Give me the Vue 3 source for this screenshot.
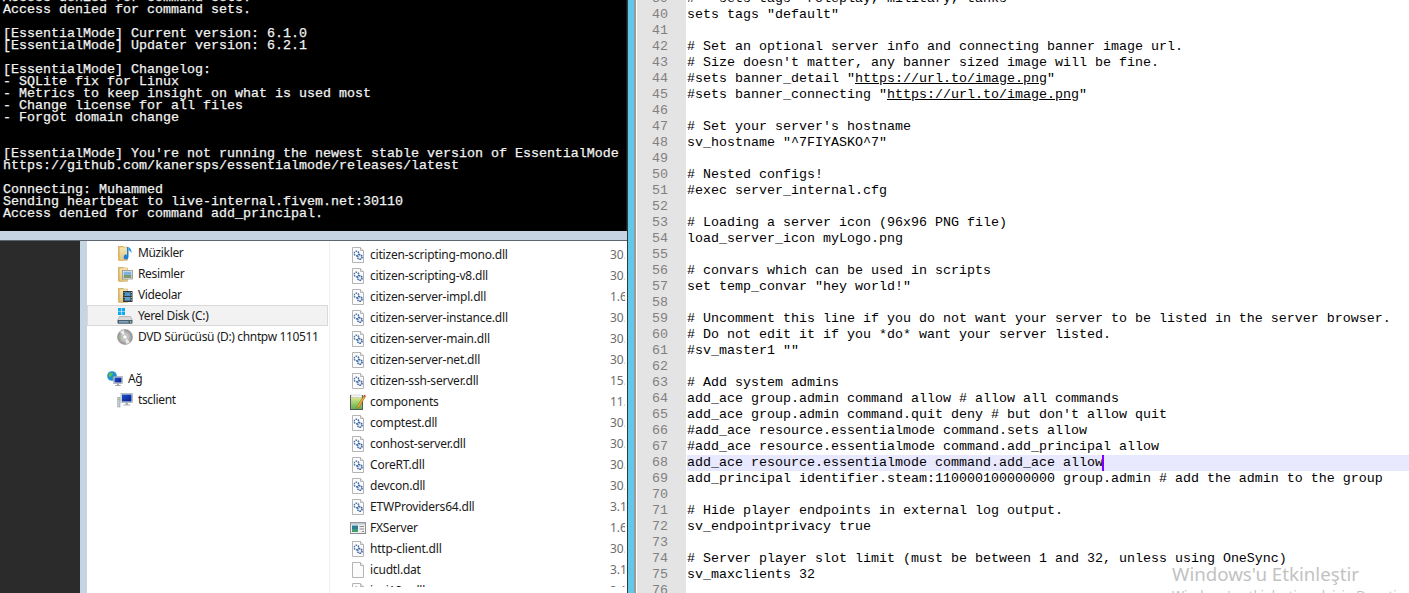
<script setup>
const consoleLines = [
  'Access denied for command sets.',
  'Access denied for command sets.',
  '',
  '[EssentialMode] Current version: 6.1.0',
  '[EssentialMode] Updater version: 6.2.1',
  '',
  '[EssentialMode] Changelog:',
  '- SQLite fix for Linux',
  '- Metrics to keep insight on what is used most',
  '- Change license for all files',
  '- Forgot domain change',
  '',
  '',
  "[EssentialMode] You're not running the newest stable version of EssentialMode",
  'https://github.com/kanersps/essentialmode/releases/latest',
  '',
  'Connecting: Muhammed',
  'Sending heartbeat to live-internal.fivem.net:30110',
  'Access denied for command add_principal.',
]

const navItems = [
  { label: 'Müzikler', icon: 'i-music' },
  { label: 'Resimler', icon: 'i-picture' },
  { label: 'Videolar', icon: 'i-video' },
  { label: 'Yerel Disk (C:)', icon: 'i-disk', selected: true },
  { label: 'DVD Sürücüsü (D:) chntpw 110511', icon: 'i-dvd' },
  { label: '', spacer: true },
  { label: 'Ağ', icon: 'i-net', top: true },
  { label: 'tsclient', icon: 'i-ts' },
]

const files = [
  ['citizen-scripting-mono.dll', 'i-dll', '30.'],
  ['citizen-scripting-v8.dll', 'i-dll', '30.'],
  ['citizen-server-impl.dll', 'i-dll', '1.6'],
  ['citizen-server-instance.dll', 'i-dll', '30.'],
  ['citizen-server-main.dll', 'i-dll', '30.'],
  ['citizen-server-net.dll', 'i-dll', '30.'],
  ['citizen-ssh-server.dll', 'i-dll', '15.'],
  ['components', 'i-ini', '11.'],
  ['comptest.dll', 'i-dll', '30.'],
  ['conhost-server.dll', 'i-dll', '30.'],
  ['CoreRT.dll', 'i-dll', '30.'],
  ['devcon.dll', 'i-dll', '30.'],
  ['ETWProviders64.dll', 'i-dll', '3.1'],
  ['FXServer', 'i-exe', '1.6'],
  ['http-client.dll', 'i-dll', '30.'],
  ['icudtl.dat', 'i-blank', '3.1'],
  ['icui18n.dll', 'i-dll', '3.1'],
]

const code = [
  '#   sets tags "roleplay, military, tanks"',
  'sets tags "default"',
  '',
  '# Set an optional server info and connecting banner image url.',
  "# Size doesn't matter, any banner sized image will be fine.",
  { pre: '#sets banner_detail "', link: 'https://url.to/image.png', post: '"' },
  { pre: '#sets banner_connecting "', link: 'https://url.to/image.png', post: '"' },
  '',
  "# Set your server's hostname",
  'sv_hostname "^7FIYASKO^7"',
  '',
  '# Nested configs!',
  '#exec server_internal.cfg',
  '',
  '# Loading a server icon (96x96 PNG file)',
  'load_server_icon myLogo.png',
  '',
  '# convars which can be used in scripts',
  'set temp_convar "hey world!"',
  '',
  '# Uncomment this line if you do not want your server to be listed in the server browser.',
  '# Do not edit it if you *do* want your server listed.',
  '#sv_master1 ""',
  '',
  '# Add system admins',
  'add_ace group.admin command allow # allow all commands',
  "add_ace group.admin command.quit deny # but don't allow quit",
  '#add_ace resource.essentialmode command.sets allow',
  '#add_ace resource.essentialmode command.add_principal allow',
  { pre: 'add_ace resource.essentialmode command.add_ace allow', active: true },
  'add_principal identifier.steam:110000100000000 group.admin # add the admin to the group',
  '',
  '# Hide player endpoints in external log output.',
  'sv_endpointprivacy true',
  '',
  '# Server player slot limit (must be between 1 and 32, unless using OneSync)',
  'sv_maxclients 32',
  '',
].map((l, i) => ({ n: 39 + i, ...(typeof l === 'string' ? { pre: l } : l) }))
</script>

<template>
  <div class="screen">
    <svg class="defs" aria-hidden="true">
      <defs>
        <linearGradient id="fold" x1="0" y1="0" x2="0" y2="1">
          <stop offset="0" stop-color="#f7e7b4" />
          <stop offset="1" stop-color="#e3c57f" />
        </linearGradient>
        <linearGradient id="scr" x1="0" y1="0" x2="1" y2="1">
          <stop offset="0" stop-color="#1e4fd0" />
          <stop offset="1" stop-color="#0a1f86" />
        </linearGradient>
        <linearGradient id="note" x1="0" y1="0" x2="0" y2="1">
          <stop offset="0" stop-color="#f4ee9a" />
          <stop offset="1" stop-color="#57b04a" />
        </linearGradient>
        <radialGradient id="cd">
          <stop offset="0" stop-color="#f4f4f4" />
          <stop offset="0.6" stop-color="#b5b5b5" />
          <stop offset="1" stop-color="#8f8f8f" />
        </radialGradient>
        <symbol id="i-folder" viewBox="0 0 16 16">
          <path d="M1 1h5l1 1.200V15.500H1z" fill="#dcb767" />
          <path d="M2.200 2h8.300v13.300H2.200z" fill="url(#fold)" stroke="#cfa95c" stroke-width=".6" />
        </symbol>
        <symbol id="i-music" viewBox="0 0 16 16">
          <use href="#i-folder" width="16" height="16" />
          <path d="M11.500 2v10a2.400 2.400 0 1 1-1.500-2.200V2z" fill="#1f7fd6" />
          <path d="M11.500 2c2 1.200 3.600 3 3 6.500-.5-1.600-1.600-2.800-3-3.200z" fill="#2d9be8" />
        </symbol>
        <symbol id="i-picture" viewBox="0 0 16 16">
          <use href="#i-folder" width="16" height="16" />
          <rect x="5.500" y="4.500" width="10" height="8.500" fill="#f1f1f1" stroke="#8f8f8f" stroke-width=".8" />
          <rect x="6.600" y="5.600" width="7.800" height="3.400" fill="#7db3de" />
          <rect x="6.600" y="9" width="7.800" height="3" fill="#7e9c6b" />
        </symbol>
        <symbol id="i-video" viewBox="0 0 16 16">
          <use href="#i-folder" width="16" height="16" />
          <rect x="6" y="4" width="9.500" height="11" fill="#33373a" />
          <rect x="8" y="5.200" width="5.500" height="3.800" fill="#4d94c8" />
          <rect x="8" y="10" width="5.500" height="3.600" fill="#5da1cf" />
          <path d="M6.700 5h.8v1h-.8zM6.700 7.500h.8v1h-.8zM6.700 10h.8v1h-.8zM6.700 12.400h.8v1h-.8zM14 5h.8v1H14zM14 7.500h.8v1H14zM14 10h.8v1H14zM14 12.400h.8v1H14z" fill="#dfe6ea" />
        </symbol>
        <symbol id="i-disk" viewBox="0 0 16 16">
          <path d="M1 0h3.200v3.200H1zM4.800 0H8v3.200H4.800zM1 3.800h3.200V7H1zM4.800 3.800H8V7H4.800z" fill="#12a9ee" />
          <path d="M2.500 8.500h11l2 4H.5z" fill="#d8d8d8" stroke="#8c8c8c" stroke-width=".5" />
          <rect x=".5" y="12" width="15" height="3.800" rx=".8" fill="#4c5e6d" />
          <rect x="2" y="13.200" width="9.500" height="1.400" fill="#88b3d2" />
          <rect x="13" y="13.200" width="1.400" height="1.400" fill="#8fe06c" />
        </symbol>
        <symbol id="i-dvd" viewBox="0 0 16 16">
          <circle cx="8" cy="8" r="7.600" fill="url(#cd)" stroke="#8a8a8a" stroke-width=".4" />
          <path d="M8 8 3 3a7 7 0 0 1 4-2zM8 8l5 5a7 7 0 0 1-4 2z" fill="#eaeaea" />
          <circle cx="8" cy="8" r="2.200" fill="#fff" stroke="#9b9b9b" stroke-width=".6" />
          <circle cx="3.400" cy="8" r=".8" fill="#7ed04e" />
        </symbol>
        <symbol id="i-net" viewBox="0 0 16 16">
          <circle cx="5" cy="5" r="4.800" fill="#1d8fd6" />
          <path d="M2.500 2.200c1.500-.8 3-.6 3.600.3.4.8-.6 1.400-1.400 1.800-.9.5-.6 1.600-1.600 1.600C2 6 .8 4.400 2.500 2.200zM6.500 6c1 0 1.800.6 1 1.800-.6.800-1.600 1.300-2 .5-.3-.7.100-2.300 1-2.300z" fill="#5fc142" />
          <rect x="6.500" y="5.500" width="9" height="7" fill="#e7eaec" stroke="#7f8a94" stroke-width=".5" />
          <rect x="7.500" y="6.500" width="7" height="5" fill="url(#scr)" />
          <path d="M10 12.500h2v1.500h1.800v1H8.200v-1H10z" fill="#9aa5ad" />
        </symbol>
        <symbol id="i-ts" viewBox="0 0 16 16">
          <rect x="4" y="1.500" width="11.500" height="9" fill="#e7eaec" stroke="#7f8a94" stroke-width=".5" />
          <rect x="5" y="2.500" width="9.500" height="7" fill="url(#scr)" />
          <path d="M8.500 10.500H11v2h2.200v1H6.300v-1h2.200z" fill="#a9b1b7" />
          <rect x=".8" y="5.500" width="2.200" height="9.500" fill="#c8ced3" stroke="#7f8a94" stroke-width=".5" />
          <rect x="1.400" y="7" width="1" height="1" fill="#69c24c" />
        </symbol>
        <symbol id="i-blank" viewBox="0 0 16 16">
          <path d="M2.500.5h8l3 3v12h-11z" fill="#fbfbfb" stroke="#b5b5b5" />
          <path d="M10.500.5v3h3" fill="#ececec" stroke="#b5b5b5" />
        </symbol>
        <symbol id="i-dll" viewBox="0 0 16 16">
          <use href="#i-blank" width="16" height="16" />
          <circle cx="6.500" cy="6.500" r="2.300" fill="#fff" stroke="#4a73ad" stroke-width="1.500" stroke-dasharray="1.500 .7" />
          <circle cx="9.800" cy="10" r="2.300" fill="#e2ecf7" stroke="#3a639f" stroke-width="1.500" stroke-dasharray="1.500 .7" />
        </symbol>
        <symbol id="i-ini" viewBox="0 0 16 16">
          <rect x=".5" y="1.500" width="12" height="14" fill="url(#note)" stroke="#55595c" />
          <path d="M1 1h11v2.500H1z" fill="#f4f4f4" stroke="#9a9a9a" stroke-width=".5" stroke-dasharray="1 .6" />
          <path d="M7 12.500 14 1.500l1.500 1L9 13.500l-2.200.8z" fill="#e8b13d" stroke="#8a5a17" stroke-width=".5" />
          <path d="m13.700 2 .7-1.200 1.300.9-.7 1.100z" fill="#b3261e" />
        </symbol>
        <symbol id="i-exe" viewBox="0 0 16 16">
          <rect x=".5" y="2.500" width="15" height="11" fill="#f1f1f1" stroke="#8b8b8b" />
          <rect x=".8" y="2.800" width="14.400" height="1.800" fill="#bcc7cf" />
          <rect x="2" y="5.500" width="6" height="6.500" fill="#2d7d96" />
          <rect x="2" y="9" width="6" height="3" fill="#3f9c73" />
          <path d="M9.500 6H14v1H9.500zM9.500 8.500H14v1H9.500zM12 11h2v1h-2z" fill="#8c8c8c" />
        </symbol>
      </defs>
    </svg>

    <section class="left">
      <div class="console">
        <div v-for="(line, i) in consoleLines" :key="i" class="con-line">{{ line }}</div>
      </div>
      <div class="console-frame"></div>
      <div class="desktop">
        <div class="dark"></div>
        <div class="explorer">
          <nav class="nav">
            <template v-for="item in navItems" :key="item.label">
              <div v-if="item.spacer" class="nav-gap"></div>
              <div v-else class="nav-row" :class="{ selected: item.selected, top: item.top }">
                <svg class="ic"><use :href="'#' + item.icon" /></svg>
                <span>{{ item.label }}</span>
              </div>
            </template>
          </nav>
          <div class="files">
            <div v-for="f in files" :key="f[0]" class="file-row">
              <svg class="ic"><use :href="'#' + f[1]" /></svg>
              <span class="fname">{{ f[0] }}</span>
              <span class="fdate">{{ f[2] }}</span>
            </div>
          </div>
        </div>
      </div>
    </section>

    <div class="strip"></div>

    <section class="editor">
      <div class="code">
        <div v-for="l in code" :key="l.n" class="code-line" :class="{ active: l.active }">
          <span class="num">{{ l.n }}</span>
          <span class="txt">{{ l.pre }}<u v-if="l.link">{{ l.link }}</u>{{ l.post }}<i v-if="l.active" class="caret"></i></span>
        </div>
      </div>
    </section>

    <div class="activate">
      <div class="a-title">Windows'u Etkinleştir</div>
      <div class="a-sub">Windows'u etkinleştirmek için Denetim Masası'na gidin</div>
    </div>
  </div>
</template>

<style>
html, body { margin: 0; overflow: hidden; background: #fff; }
</style>

<style scoped>
.screen {
  position: relative;
  display: flex;
  width: 1409px;
  height: 593px;
  overflow: hidden;
  background: #fff;
}
.defs { position: absolute; width: 0; height: 0; }
.left {
  display: flex;
  flex-direction: column;
  width: 627px;
  flex: none;
}
.console {
  height: 231px;
  flex: none;
  overflow: hidden;
  background: #000;
  border-right: 1px solid #1c1c1c;
  box-sizing: border-box;
  padding-left: 3px;
  color: #f2f2f2;
  -webkit-text-stroke: 0.25px #f2f2f2;
  font: 13.33px/12px "Liberation Mono", monospace;
}
.con-line { height: 12px; white-space: pre; }
.con-line:first-child { margin-top: -8px; }
.console-frame {
  height: 9px;
  flex: none;
  background: #c6d3e2;
  border-bottom: 1px solid #5d6670;
}
.desktop { flex: 1; display: flex; min-height: 0; }
.dark { width: 80px; flex: none; background: #2b2b2b; }
.explorer {
  flex: 1;
  display: flex;
  min-width: 0;
  border-left: 7px solid #c5d6e2;
  background: #fff;
  font: 12px "Noto Sans", sans-serif;
  letter-spacing: -0.2px;
  color: #1a1a1a;
}
.nav {
  width: 243px;
  flex: none;
  box-sizing: border-box;
  padding-top: 1px;
  border-right: 1px solid #efefef;
}
.nav-row {
  display: flex;
  align-items: center;
  gap: 5px;
  height: 21px;
  box-sizing: border-box;
  padding-left: 30px;
  margin-right: 1px;
  white-space: nowrap;
  letter-spacing: -0.36px;
}
.nav-row.top { padding-left: 20px; }
.nav-row.selected {
  background: #f2f2f2;
  outline: 1px solid #d9d9d9;
  outline-offset: -1px;
}
.nav-gap { height: 21px; }
.ic { width: 16px; height: 16px; flex: none; }
.files {
  flex: 1;
  min-width: 0;
  height: 346px;
  overflow: hidden;
  padding-top: 3px;
  box-sizing: border-box;
}
.file-row {
  display: flex;
  align-items: center;
  height: 21px;
  padding-left: 20px;
  white-space: nowrap;
}
.fname { margin-left: 4px; width: 240px; flex: none; }
.fdate { color: #6d6d6d; width: 15px; overflow: hidden; flex: none; letter-spacing: 0; }
.strip {
  width: 7px;
  flex: none;
  background: #62c8ea;
  border-left: 1px solid #2a3a44;
  box-sizing: border-box;
}
.editor {
  flex: 1;
  min-width: 0;
  border-left: 2px solid #9a9a9a;
  background: #fff;
  overflow: hidden;
  padding-left: 1px;
}
.code {
  margin-top: -9px;
  font: 13.33px/16px "Liberation Mono", monospace;
  color: #000;
}
.code-line { display: flex; height: 16px; white-space: pre; }
.num {
  width: 34px;
  padding-left: 15px;
  flex: none;
  background: #e4e4e4;
  color: #808080;
  margin-right: 1px;
}
.txt { flex: 1; position: relative; }
.active .txt { background: #e8e8ff; }
.caret {
  position: absolute;
  display: inline-block;
  width: 2px;
  height: 16px;
  background: #8000ff;
  margin-left: -1px;
}
.activate {
  position: absolute;
  left: 1172px;
  top: 561px;
  color: #c2c2c2;
  font-family: "Noto Sans", sans-serif;
  white-space: nowrap;
  pointer-events: none;
}
.a-title { font-size: 18.7px; line-height: 26px; }
.a-sub { font-size: 13px; line-height: 18px; margin-top: -1px; }
</style>
